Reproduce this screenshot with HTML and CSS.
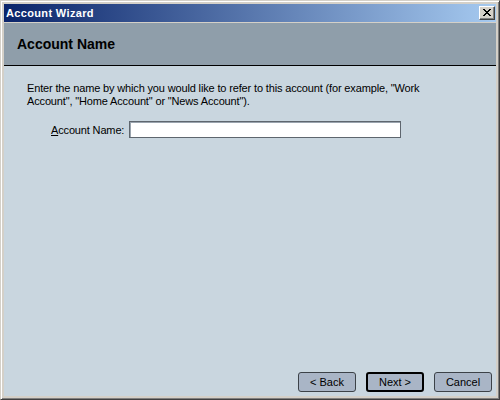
FILE: index.html
```html
<!DOCTYPE html>
<html>
<head>
<meta charset="utf-8">
<link rel="stylesheet" href="styles.css">
</head>
<body>
<div class="window">
  <div class="titlebar">
    <span class="title">Account Wizard</span>
    <span class="close">
      <svg width="8" height="7" viewBox="0 0 8 7" shape-rendering="crispEdges">
        <path d="M0 0h2v1h-2zM6 0h2v1h-2zM1 1h2v1h-2zM5 1h2v1h-2zM2 2h4v1h-4zM3 3h2v1h-2zM2 4h4v1h-4zM1 5h2v1h-2zM5 5h2v1h-2zM0 6h2v1h-2zM6 6h2v1h-2z" fill="#000"/>
      </svg>
    </span>
  </div>
  <div class="header">Account Name</div>
  <div class="content">
    <p class="intro">Enter the name by which you would like to refer to this account (for example, "Work<br>Account", "Home Account" or "News Account").</p>
    <div class="field">
      <label class="label"><u>A</u>ccount Name:</label>
      <div class="input"></div>
    </div>
    <div class="buttons">
      <div class="btn">&lt; Back</div>
      <div class="btn default">Next &gt;</div>
      <div class="btn">Cancel</div>
    </div>
  </div>
</div>
</body>
</html>
```
FILE: styles.css
```css
html, body {
  margin: 0;
  padding: 0;
  background: #d4d0c8;
}
.window {
  width: 500px;
  height: 400px;
  box-sizing: border-box;
  border: 1px solid;
  border-color: #d4d0c8 #404040 #404040 #d4d0c8;
  box-shadow: inset 1px 1px 0 #ffffff, inset -1px -1px 0 #808080;
  padding: 3px;
  background: #d4d0c8;
  display: flex;
  flex-direction: column;
  font-family: "Liberation Sans", Arial, sans-serif;
  font-size: 11px;
  color: #000;
}
.titlebar {
  height: 18px;
  flex: none;
  margin-bottom: 1px;
  background: linear-gradient(to right, #0a246a, #a6caf0);
  display: flex;
  align-items: center;
  justify-content: space-between;
  padding: 0 1px 0 2px;
}
.title {
  color: #fff;
  font-weight: bold;
  font-size: 11px;
  letter-spacing: 0.35px;
}
.close {
  width: 16px;
  height: 14px;
  box-sizing: border-box;
  background: #d4d0c8;
  border: 1px solid;
  border-color: #ffffff #404040 #404040 #ffffff;
  box-shadow: inset -1px -1px 0 #808080;
  display: flex;
  align-items: center;
  justify-content: center;
  padding: 0 1px 1px 0;
}
.close svg { display: block; }
.header {
  height: 42px;
  flex: none;
  background: #8f9eaa;
  border-bottom: 1px solid #000;
  display: flex;
  align-items: center;
  padding-left: 13px;
  font-size: 14px;
  font-weight: bold;
}
.content {
  flex: 1;
  background: #c9d6df;
  display: flex;
  flex-direction: column;
  padding: 16px 4px 4px 23px;
}
.intro {
  margin: 0;
  line-height: 13px;
  letter-spacing: -0.15px;
}
.field {
  display: flex;
  align-items: center;
  margin-top: 13px;
  padding-left: 24px;
}
.label {
  letter-spacing: -0.15px;
  width: 78px;
}
.label u { text-decoration-thickness: 1px; text-underline-offset: 1px; }
.input {
  width: 272px;
  height: 17px;
  box-sizing: border-box;
  background: #fff;
  border: 1px solid #5e666e;
  box-shadow: inset 1px 1px 0 #9aa4ae;
}
.buttons {
  margin-top: auto;
  display: flex;
  justify-content: flex-end;
  gap: 10px;
}
.btn {
  width: 58px;
  height: 20px;
  box-sizing: border-box;
  border: 1px solid #3c4248;
  border-radius: 3px;
  background: #a9b5c6;
  display: flex;
  align-items: center;
  justify-content: center;
}
.btn.default {
  border: 2px solid #000;
}
```
